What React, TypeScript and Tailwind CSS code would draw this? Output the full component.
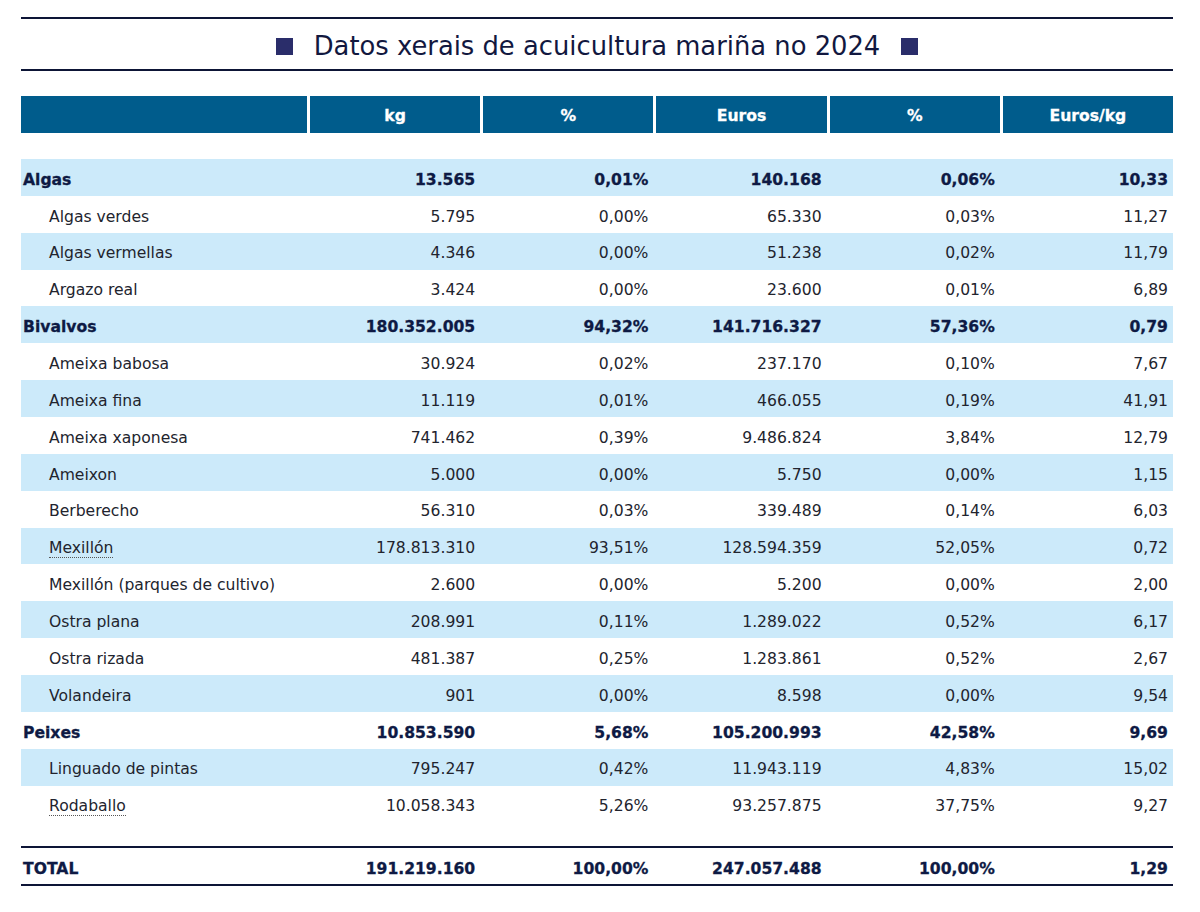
const rows: [string, string, string, string, string, string, 'group' | 'item' | 'abbr'][] = [
  ['Algas', '13.565', '0,01%', '140.168', '0,06%', '10,33', 'group'],
  ['Algas verdes', '5.795', '0,00%', '65.330', '0,03%', '11,27', 'item'],
  ['Algas vermellas', '4.346', '0,00%', '51.238', '0,02%', '11,79', 'item'],
  ['Argazo real', '3.424', '0,00%', '23.600', '0,01%', '6,89', 'item'],
  ['Bivalvos', '180.352.005', '94,32%', '141.716.327', '57,36%', '0,79', 'group'],
  ['Ameixa babosa', '30.924', '0,02%', '237.170', '0,10%', '7,67', 'item'],
  ['Ameixa fina', '11.119', '0,01%', '466.055', '0,19%', '41,91', 'item'],
  ['Ameixa xaponesa', '741.462', '0,39%', '9.486.824', '3,84%', '12,79', 'item'],
  ['Ameixon', '5.000', '0,00%', '5.750', '0,00%', '1,15', 'item'],
  ['Berberecho', '56.310', '0,03%', '339.489', '0,14%', '6,03', 'item'],
  ['Mexillón', '178.813.310', '93,51%', '128.594.359', '52,05%', '0,72', 'abbr'],
  ['Mexillón (parques de cultivo)', '2.600', '0,00%', '5.200', '0,00%', '2,00', 'item'],
  ['Ostra plana', '208.991', '0,11%', '1.289.022', '0,52%', '6,17', 'item'],
  ['Ostra rizada', '481.387', '0,25%', '1.283.861', '0,52%', '2,67', 'item'],
  ['Volandeira', '901', '0,00%', '8.598', '0,00%', '9,54', 'item'],
  ['Peixes', '10.853.590', '5,68%', '105.200.993', '42,58%', '9,69', 'group'],
  ['Linguado de pintas', '795.247', '0,42%', '11.943.119', '4,83%', '15,02', 'item'],
  ['Rodaballo', '10.058.343', '5,26%', '93.257.875', '37,75%', '9,27', 'abbr'],
]

const headers = ['kg', '%', 'Euros', '%', 'Euros/kg']

const gridCols = 'grid grid-cols-[286px_repeat(5,minmax(0,1fr))] gap-x-[3px]'
// Verdana-style heavy bold
const heavy = 'font-bold [-webkit-text-stroke:0.3px_currentColor]'

export default function App() {
  return (
    <div
      className="min-h-[912px] bg-white pt-[17px] text-[15.6px] text-[#22242e]"
      style={{ fontFamily: '"DejaVu Sans", Verdana, sans-serif' }}
    >
      <div className="ml-[21px] w-[1152px]">
        {/* Title */}
        <div className="flex h-[54px] items-center justify-center border-y-2 border-[#0d1536] pt-[5px]">
          <span className="inline-block h-[17px] w-[17px] bg-[#2a2d6a]" />
          <h1 className="mx-[21px] text-[25.8px] leading-none text-[#12183f]">
            Datos xerais de acuicultura mariña no 2024
          </h1>
          <span className="inline-block h-[17px] w-[17px] bg-[#2a2d6a]" />
        </div>

        {/* Header */}
        <div className={`${gridCols} mt-[25px] h-[37px]`}>
          <div className="bg-[#005c8c]" />
          {headers.map((h, i) => (
            <div
              key={i}
              className={`flex items-center justify-center bg-[#005c8c] pt-[4px] text-white ${heavy}`}
            >
              {h}
            </div>
          ))}
        </div>

        {/* Body */}
        <div className="mt-[26px]">
          {rows.map((r, idx) => {
            const bold = r[6] === 'group'
            return (
              <div
                key={idx}
                className={`${gridCols} h-[36.86px] items-center pt-[6px] ${idx % 2 === 0 ? 'bg-[#cceafa]' : 'bg-white'} ${bold ? `${heavy} text-[#0e1a44]` : ''}`}
              >
                <div className={bold ? 'pl-[2px]' : 'pl-[28px]'}>
                  {r[6] === 'abbr' ? (
                    <span className="border-b border-dotted border-[#555]">{r[0]}</span>
                  ) : (
                    r[0]
                  )}
                </div>
                {r.slice(1, 6).map((v, i) => (
                  <div key={i} className="pr-[5px] text-right">
                    {v}
                  </div>
                ))}
              </div>
            )
          })}
        </div>

        {/* Total */}
        <div
          className={`${gridCols} mt-[24px] h-[40px] items-center border-y-2 border-[#0d1536] pt-[6px] text-[#0e1a44] ${heavy}`}
        >
          <div className="pl-[2px]">TOTAL</div>
          {['191.219.160', '100,00%', '247.057.488', '100,00%', '1,29'].map((v, i) => (
            <div key={i} className="pr-[5px] text-right">
              {v}
            </div>
          ))}
        </div>
      </div>
    </div>
  )
}
